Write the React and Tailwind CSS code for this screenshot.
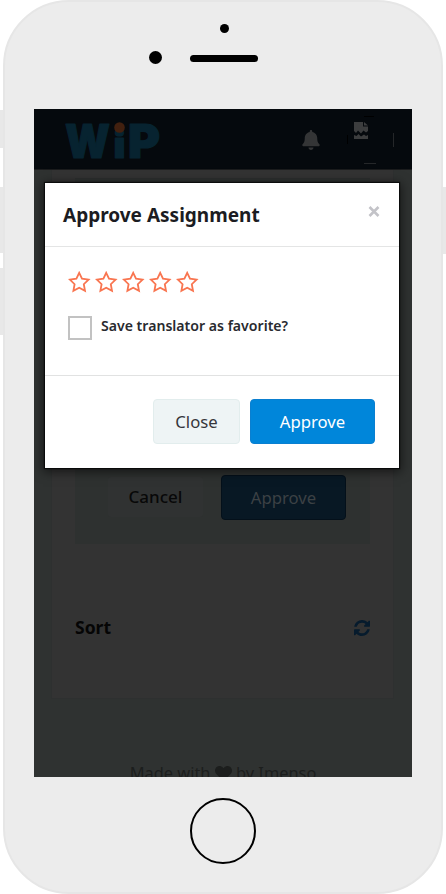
import React from "react";
import { FaBell, FaHeart } from "react-icons/fa";

function Star() {
  return (
    <svg className="h-[23px] w-[23px]" viewBox="0 0 23 23" fill="none" stroke="#f97550" strokeWidth="1.8" strokeLinejoin="miter">
      <path d="M11.2 1.8 L14 7.7 L20.6 8.600 L15.8 13.2 L17 19.8 L11.2 16.7 L5.4 19.8 L6.600 13.2 L1.8 8.600 L8.400 7.7 Z" />
    </svg>
  );
}

function Logo() {
  return (
    <svg className="h-[58px] w-[104px]" viewBox="0 -10 104 58" fill="#072330" stroke="#072330" strokeWidth="1.2" strokeLinejoin="round" fontFamily="Inter, sans-serif" fontWeight="900">
      <text x="1" y="36.500" fontSize="47" textLength="45" lengthAdjust="spacingAndGlyphs">W</text>
      <text x="49.500" y="36.500" fontSize="37" textLength="12" lengthAdjust="spacingAndGlyphs">i</text>
      <circle cx="55.500" cy="6.500" r="5.300" fill="#42200f" stroke="none" />
      <text x="64" y="36.500" fontSize="47" textLength="32" lengthAdjust="spacingAndGlyphs">P</text>
    </svg>
  );
}

function Header() {
  return (
    <header className="flex h-[61px] shrink-0 items-start border-b border-[#1b1c1d] bg-[#05090d]">
      <div className="pt-[2px] pl-[30px]"><Logo /></div>
      <FaBell className="mt-[21px] ml-[134px] h-[20px] w-[18px] text-[#343536]" />
      <svg className="mt-[7px] ml-[25px] h-[50px] w-[54px]" viewBox="0 0 54 50">
        <path d="M9 6h9v4.500h5V15l-2 1.500-2.500-2-2.500 3-3-3-2 2.500-2-2z M9 19l2.500 1 2-2 2.500 2.500 3-2 2 1.500 2-1v4H9z M19 6l4 3.500h-4z" fill="#3c3d3e" />
        <path d="M19 47.500h12" stroke="#252729" />
        <path d="M48.500 17v14" stroke="#252729" />
        <path d="M19 .5h10M2.500 19v9" stroke="#000" />
      </svg>
    </header>
  );
}

function Page() {
  return (
    <div className="flex h-full flex-col bg-[#2f3231]">
      <Header />
      <section className="mr-[18px] ml-[17px] flex h-[529px] shrink-0 flex-col border border-t-0 border-[#2e3030] bg-[#333333] px-[23px] pt-[8px]">
        <div className="flex h-[366px] items-end justify-end gap-[18px] border-t border-[#2c2e2e] bg-[#2e3130] pr-[24px] pb-[24px]">
          <button className="mb-[3px] h-[40px] w-[95px] rounded-[3px] bg-[#303232] text-[17px] font-medium text-[#080808]">Cancel</button>
          <button className="h-[45px] w-[125px] rounded-[4px] border border-[#04101a] bg-[#081824] text-[16.7px] text-[#3c4144]">Approve</button>
        </div>
        <div className="mt-[71px] flex h-[26px] items-center justify-between">
          <span className="text-[17.5px] leading-none font-bold text-[#050505]">Sort</span>
          <svg className="h-[16px] w-[16px]" viewBox="0 0 1536 1536" fill="#061b2d">
            <path d="M1511 928q0 5-1 7-64 268-268 434.500t-478 166.500q-146 0-282.500-55t-243.500-157l-129 129q-19 19-45 19t-45-19-19-45v-448q0-26 19-45t45-19h448q26 0 45 19t19 45-19 45l-137 137q71 66 161 102t187 36q134 0 250-65t186-179q11-17 53-117 8-23 30-23h192q13 0 22.500 9.500t9.500 22.500zm25-800v448q0 26-19 45t-45 19h-448q-26 0-45-19t-19-45 19-45l138-138q-148-137-349-137-134 0-250 65t-186 179q-11 17-53 117-8 23-30 23h-199q-13 0-22.500-9.500t-9.500-22.500v-7q65-268 270-434.500t480-166.500q146 0 284 55.500t245 156.500l130-129q19-19 45-19t45 19 19 45z" />
          </svg>
        </div>
      </section>
      <footer className="mt-[61px] flex shrink-0 items-center justify-center text-[16.4px] leading-[26px] whitespace-pre text-[#1c1e1d]">
        Made with <FaHeart className="h-[17px] w-[17px]" /> by Imenso
      </footer>
    </div>
  );
}

function Modal() {
  return (
    <div className="flex h-[285px] w-[354px] flex-col bg-white shadow-[0_2px_10px_2px_rgba(0,0,0,0.55),0_0_1px_1px_#101111]">
      <div className="flex h-[64px] items-start justify-between border-b border-[#e4e5e5] pr-[18px] pl-[18px]">
        <h1 className="pt-[18px] text-[19px] leading-[28px] font-bold text-[#1b1c22]">Approve Assignment</h1>
        <svg className="mt-[22px] h-[13px] w-[14px]" viewBox="0 0 14 13" stroke="#c3c3c8" strokeWidth="2.600">
          <path d="M2.500 2l9 9M11.500 2l-9 9" />
        </svg>
      </div>
      <div className="h-[129px] border-b border-[#e1e2e2] pt-[24px] pl-[23px]">
        <div className="flex gap-[4px]"><Star /><Star /><Star /><Star /><Star /></div>
        <label className="mt-[22px] flex items-start gap-[9px]">
          <span className="h-[24px] w-[24px] border-2 border-[#c2c2c2] bg-white" />
          <span className="text-[14.1px] leading-[20px] font-semibold text-[#292a2f]">Save translator as favorite?</span>
        </label>
      </div>
      <div className="flex gap-[10px] pt-[23px] pl-[108px]">
        <button className="h-[45px] w-[87px] rounded-[4px] border border-[#e2eded] bg-[#eef4f5] text-[16.7px] text-[#35363b]">Close</button>
        <button className="h-[45px] w-[125px] rounded-[4px] border border-[#0a7fd0] bg-[#0086da] text-[16.7px] text-white">Approve</button>
      </div>
    </div>
  );
}

export default function App() {
  return (
    <div className="relative h-[894px] w-[446px] overflow-hidden bg-white font-['Noto_Sans',sans-serif]">
      <div className="absolute top-[110px] left-0 h-[38px] w-[5px] bg-[#e8e8e8]" />
      <div className="absolute top-[187px] left-0 h-[66px] w-[5px] bg-[#e8e8e8]" />
      <div className="absolute top-[268px] left-0 h-[67px] w-[5px] bg-[#e8e8e8]" />
      <div className="absolute top-[187px] right-0 h-[67px] w-[5px] bg-[#e8e8e8]" />
      <div className="relative ml-[3px] flex h-[894px] w-[440px] flex-col rounded-[66px] border-2 border-[#e6e6e6] bg-[#ececec] pl-[29px]">
        <div className="flex h-[107px] shrink-0 flex-col">
          <div className="mt-[22px] ml-[186px] h-[9px] w-[9px] rounded-full bg-black" />
          <div className="mt-[18px] flex items-center">
            <div className="ml-[115px] h-[13px] w-[13px] rounded-full bg-black" />
            <div className="mt-[2px] ml-[28px] h-[7px] w-[68px] rounded-full bg-black" />
          </div>
        </div>
        <main className="relative h-[668px] w-[378px] shrink-0 overflow-hidden">
          <Page />
          <div className="absolute top-[74px] left-[11px]"><Modal /></div>
        </main>
        <div className="mt-[21px] ml-[156px] h-[66px] w-[66px] shrink-0 rounded-full border-2 border-black" />
      </div>
    </div>
  );
}
